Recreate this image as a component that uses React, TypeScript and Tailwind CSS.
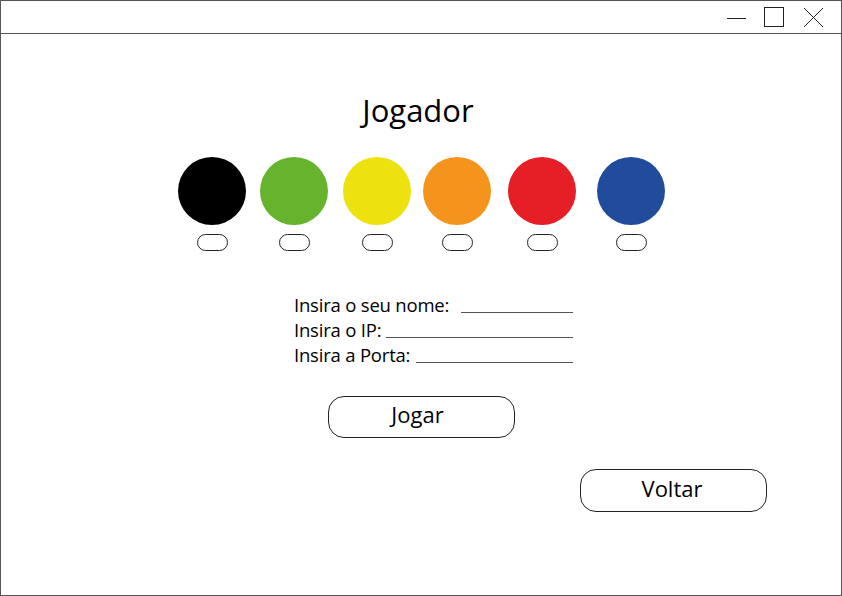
import React from "react";

const colors = [
  { c: "bg-black", ml: "ml-[177px]" },
  { c: "bg-[#66b32e]", ml: "ml-[14px]" },
  { c: "bg-[#ede10f]", ml: "ml-[15px]" },
  { c: "bg-[#f5941c]", ml: "ml-[12px]" },
  { c: "bg-[#e61e25]", ml: "ml-[17px]" },
  { c: "bg-[#214c9b]", ml: "ml-[21px]" },
];

function Field({ label, gap }: { label: string; gap: string }) {
  return (
    <div className="flex items-end h-[25px]">
      <span className="whitespace-nowrap">{label}</span>
      <div className={`flex-1 border-b border-[#555] mb-[1px] ${gap}`} />
    </div>
  );
}

export default function App() {
  return (
    <div
      className="w-[842px] h-[596px] border border-[#555] bg-white flex flex-col text-black"
      style={{ fontFamily: '"Open Sans", "Liberation Sans", sans-serif' }}
    >
      {/* Title bar */}
      <div className="h-[33px] border-b border-[#555] flex items-center justify-end pr-[17px]">
        <svg width="100" height="24" viewBox="0 0 100 24" className="mt-[1px]">
          <line x1="3" y1="12.5" x2="22" y2="12.5" stroke="#222" strokeWidth="1" />
          <rect x="40.5" y="1.5" width="19" height="19" fill="none" stroke="#222" strokeWidth="1" />
          <line x1="80" y1="2" x2="99" y2="21" stroke="#222" strokeWidth="1" />
          <line x1="99" y1="2" x2="80" y2="21" stroke="#222" strokeWidth="1" />
        </svg>
      </div>

      {/* Content */}
      <div className="flex flex-col">
        <h1 className="text-[31px] leading-none text-center mt-[61px] ml-[-6px]">Jogador</h1>

        <div className="flex mt-[31px]">
          {colors.map((it, i) => (
            <div key={i} className={`flex flex-col items-center ${it.ml}`}>
              <div className={`w-[68px] h-[68px] rounded-full ${it.c}`} />
              <div className="w-[31px] h-[17px] rounded-full border-[1.5px] border-[#222] mt-[9px]" />
            </div>
          ))}
        </div>

        <div className="ml-[293px] w-[279px] mt-[38px] text-[18.5px] leading-none tracking-[-0.2px]">
          <Field label="Insira o seu nome:" gap="ml-[12px]" />
          <Field label="Insira o IP:" gap="ml-[5px]" />
          <Field label="Insira a Porta:" gap="ml-[6px]" />
        </div>

        <div className="flex ml-[327px] mt-[32px]">
          <button className="w-[187px] h-[42px] rounded-[16px] border border-[#222] text-[22px] leading-none pb-[6px] pr-[8px]">
            Jogar
          </button>
        </div>

        <div className="flex ml-[579px] mt-[31px]">
          <button className="w-[187px] h-[43px] rounded-[16px] border border-[#222] text-[22px] leading-none pb-[6px] pr-[3px]">
            Voltar
          </button>
        </div>
      </div>
    </div>
  );
}
